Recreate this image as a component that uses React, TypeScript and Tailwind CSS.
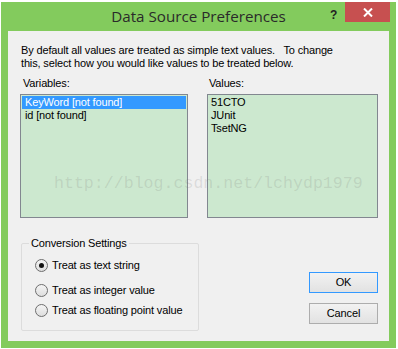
import React from 'react'

const sans = { fontFamily: '"Liberation Sans", Arial, sans-serif', letterSpacing: '-0.15px' }

function Radio({ label, checked }: { label: string; checked?: boolean }) {
  return (
    <div className="flex items-center h-[13px]">
      <div className="w-[13px] h-[13px] rounded-full border border-[#6e6e6e] bg-gradient-to-b from-[#f4f4f4] to-[#dedede] flex items-center justify-center shrink-0">
        {checked && <div className="w-[5px] h-[5px] rounded-full bg-[#111]" />}
      </div>
      <span className="ml-[4px] text-[11px] leading-[13px] text-black">{label}</span>
    </div>
  )
}

function Button({ label, focused }: { label: string; focused?: boolean }) {
  return (
    <div
      className={`w-[69px] h-[21px] border flex items-center justify-center text-[11px] text-black bg-gradient-to-b from-[#f2f2f2] to-[#e2e2e2] ${
        focused ? 'border-[#3399ff]' : 'border-[#adadad]'
      }`}
    >
      {label}
    </div>
  )
}

export default function App() {
  return (
    <div className="w-[398px] h-[349px] bg-white overflow-hidden relative" style={sans}>
      <div className="ml-[1px] mt-[2px] w-[395px] h-[346px] bg-[#83cb5d] flex flex-col">
        {/* Title bar */}
        <div className="h-[29px] relative flex items-center justify-center">
          <span
            className="text-[15.2px] text-[#2a2a2a] mt-[-1px]"
            style={{ fontFamily: '"Open Sans", "Noto Sans", sans-serif', letterSpacing: 0 }}
          >
            Data Source Preferences
          </span>
          <span className="absolute left-[329px] top-[4px] text-[12px] font-bold text-[#222]">?</span>
          <div className="absolute right-[6px] top-0 w-[45px] h-[20px] bg-[#c75050] flex items-center justify-center">
            <svg width="10" height="9" viewBox="0 0 10 9">
              <path d="M1 0.5 L9 8.5 M9 0.5 L1 8.5" stroke="white" strokeWidth="2" />
            </svg>
          </div>
        </div>

        {/* Client area */}
        <div className="mx-[7px] h-[310px] bg-[#f0f0f0] pl-[12px] pr-[11px] pt-[13px]">
          <p className="text-[11px] leading-[13px] text-black pl-[1px]">
            By default all values are treated as simple text values.&nbsp;&nbsp; To change
            <br />
            this, select how you would like values to be treated below.
          </p>

          <div className="flex mt-[7px] gap-[19px]">
            <div className="w-[168px]">
              <div className="text-[11px] leading-[13px] pl-[3px] text-black">Variables:</div>
              <div className="mt-[4px] h-[124px] border border-[#828790] bg-[#cce8cf] p-[1px]">
                <div className="h-[13px] bg-[#3399ff] text-white text-[11px] leading-[13px] pl-[3px]">
                  KeyWord [not found]
                </div>
                <div className="h-[13px] text-black text-[11px] leading-[13px] pl-[3px]">id [not found]</div>
              </div>
            </div>
            <div className="w-[171px]">
              <div className="text-[11px] leading-[13px] pl-[2px] text-black">Values:</div>
              <div className="mt-[4px] h-[124px] border border-[#828790] bg-[#cce8cf] p-[1px] text-[11px] leading-[13px] text-black">
                <div className="pl-[2px]">51CTO</div>
                <div className="pl-[2px]">JUnit</div>
                <div className="pl-[2px]">TsetNG</div>
              </div>
            </div>
          </div>

          <div className="flex justify-between items-start mt-[19px]">
            <fieldset className="w-[178px] h-[94px] border border-[#dcdcdc] rounded-[2px] pl-[13px] ml-[1px]">
              <legend className="text-[11px] leading-[13px] text-black px-[2px] ml-[-6px]">Conversion Settings</legend>
              <div className="flex flex-col pt-[9px]">
                <Radio label="Treat as text string" checked />
                <div className="h-[12px]" />
                <Radio label="Treat as integer value" />
                <div className="h-[7px]" />
                <Radio label="Treat as floating point value" />
              </div>
            </fieldset>
            <div className="flex flex-col gap-[10px] mt-[35px]">
              <Button label="OK" focused />
              <Button label="Cancel" />
            </div>
          </div>
        </div>
      </div>

      {/* watermark */}
      <div
        className="absolute left-[54px] top-[173px] text-[16.6px] leading-[22px] text-[rgba(110,110,110,0.17)] pointer-events-none whitespace-nowrap"
        style={{ fontFamily: '"Liberation Mono", monospace', letterSpacing: 0 }}
      >
        http://blog.csdn.net/lchydp1979
      </div>
    </div>
  )
}
